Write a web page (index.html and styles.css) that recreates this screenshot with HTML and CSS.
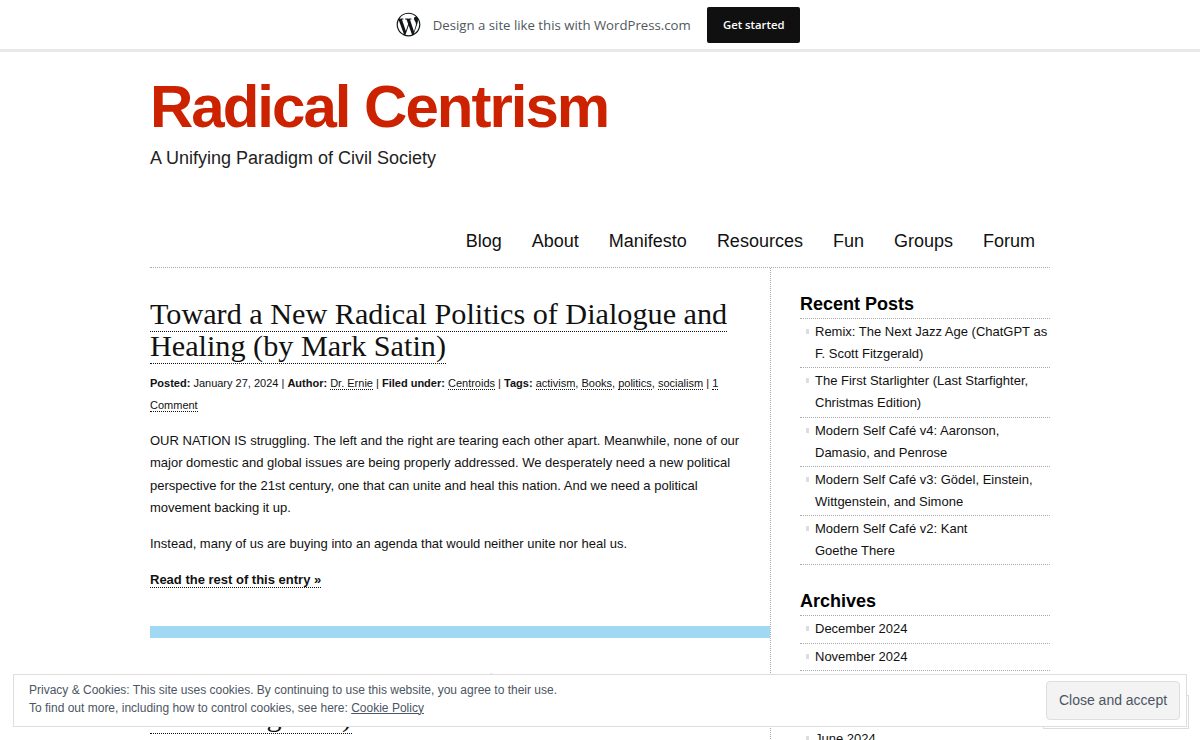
FILE: index.html
```html
<!DOCTYPE html>
<html lang="en">
<head>
<meta charset="utf-8">
<title>Radical Centrism</title>
<link rel="stylesheet" href="styles.css">
</head>
<body>
<div class="topbar">
  <svg class="wp-logo" viewBox="0 0 24 24" width="25" height="25" aria-hidden="true"><path fill="#101517" d="M12 .6C5.7.6.6 5.7.6 12S5.7 23.400 12 23.400 23.400 18.300 23.400 12 18.300.6 12 .6zM1.750 12c0-1.490.32-2.900.89-4.170l4.890 13.400C4.110 19.570 1.750 16.060 1.750 12zM12 22.250c-1.010 0-1.980-.15-2.900-.42l3.080-8.940 3.150 8.640c.02.05.05.1.08.14-1.070.37-2.210.58-3.410.58zM13.410 7.190c.62-.03 1.170-.1 1.170-.1.550-.06.490-.88-.06-.85 0 0-1.660.13-2.730.13-1 0-2.700-.13-2.700-.13-.55-.03-.62.820-.06.850 0 0 .52.070 1.070.1l1.590 4.360-2.240 6.700-3.720-11.060c.62-.03 1.170-.1 1.170-.1.550-.06.490-.88-.06-.85 0 0-1.660.13-2.730.13-.19 0-.42 0-.66-.01C5.050 3.500 8.310 1.750 12 1.750c2.750 0 5.250 1.050 7.130 2.770-.05 0-.09-.01-.14-.01-1.040 0-1.770.9-1.770 1.870 0 .87.5 1.610 1.040 2.480.4.710.87 1.610.87 2.920 0 .910-.35 1.960-.81 3.430l-1.060 3.550-3.850-11.570zM17.160 20.900l3.130-9.050c.58-1.460.78-2.620.78-3.660 0-.38-.03-.73-.07-1.050.80 1.460 1.250 3.130 1.250 4.860 0 3.780-2.050 7.080-5.090 8.900z"/></svg>
  <span class="topbar-text">Design a site like this with WordPress.com</span>
  <a class="topbar-btn" href="#">Get started</a>
</div>

<div class="page">
  <header class="masthead">
    <h1 class="site-title">Radical Centrism</h1>
    <p class="site-tag">A Unifying Paradigm of Civil Society</p>
  </header>

  <nav class="nav">
    <a href="#">Blog</a>
    <a href="#">About</a>
    <a href="#">Manifesto</a>
    <a href="#">Resources</a>
    <a href="#">Fun</a>
    <a href="#">Groups</a>
    <a href="#">Forum</a>
  </nav>

  <div class="columns">
    <main class="content">
      <article class="post">
        <h2 class="post-title"><a href="#">Toward a New Radical Politics of Dialogue and Healing (by Mark Satin)</a></h2>
        <p class="meta"><b>Posted:</b> January 27, 2024 | <b>Author:</b> <a href="#">Dr. Ernie</a> | <b>Filed under:</b> <a href="#">Centroids</a> | <b>Tags:</b> <a href="#">activism</a>, <a href="#">Books</a>, <a href="#">politics</a>, <a href="#">socialism</a> | <a href="#">1 Comment</a></p>
        <p class="body-text">OUR NATION IS struggling. The left and the right are tearing each other apart. Meanwhile, none of our major domestic and global issues are being properly addressed. We desperately need a new political perspective for the 21st century, one that can unite and heal this nation. And we need a political movement backing it up.</p>
        <p class="body-text">Instead, many of us are buying into an agenda that would neither unite nor heal us.</p>
        <p class="body-text"><a class="more" href="#">Read the rest of this entry »</a></p>
      </article>
      <div class="divider"></div>
      <article class="post">
        <h2 class="post-title"><a href="#">Remix: The Next Jazz Age (ChatGPT as F.<br>Scott Fitzgerald)</a></h2>
      </article>
    </main>

    <aside class="sidebar">
      <section class="widget">
        <h3 class="widget-title">Recent Posts</h3>
        <ul class="widget-list">
          <li><a href="#">Remix: The Next Jazz Age (ChatGPT as F. Scott Fitzgerald)</a></li>
          <li><a href="#">The First Starlighter (Last Starfighter, Christmas Edition)</a></li>
          <li><a href="#">Modern Self Café v4: Aaronson, Damasio, and Penrose</a></li>
          <li><a href="#">Modern Self Café v3: Gödel, Einstein, Wittgenstein, and Simone</a></li>
          <li><a href="#">Modern Self Café v2: Kant<br>Goethe There</a></li>
        </ul>
      </section>
      <section class="widget">
        <h3 class="widget-title">Archives</h3>
        <ul class="widget-list">
          <li><a href="#">December 2024</a></li>
          <li><a href="#">November 2024</a></li>
          <li><a href="#">October 2024</a></li>
          <li><a href="#">July 2024</a></li>
          <li><a href="#">June 2024</a></li>
        </ul>
      </section>
    </aside>
  </div>
</div>

<div class="actionbar-box"></div>
<div class="cookie">
  <div class="cookie-text">Privacy &amp; Cookies: This site uses cookies. By continuing to use this website, you agree to their use.<br>To find out more, including how to control cookies, see here: <a href="#">Cookie Policy</a></div>
  <button class="cookie-btn" type="button">Close and accept</button>
</div>
</body>
</html>
```
FILE: styles.css
```css
* { box-sizing: border-box; }
html, body { height: 100%; }
body {
  margin: 0;
  overflow: hidden;
  background: #fff;
  color: #111;
  font-family: "Liberation Sans", Arial, sans-serif;
  font-size: 13px;
}
a { color: inherit; text-decoration: none; }

.topbar {
  height: 52px;
  background: #fff;
  border-bottom: 3px solid #e8e8e8;
  display: flex;
  align-items: center;
  justify-content: center;
  padding-right: 4px;
}
.wp-logo { margin-right: 12px; }
.topbar-text {
  font-family: "Open Sans", sans-serif;
  font-size: 13.2px;
  color: #50575e;
  margin-right: 16.500px;
}
.topbar-btn {
  width: 93px;
  height: 36px;
  background: #101010;
  border-radius: 2px;
  color: #fff;
  font-family: "Open Sans", sans-serif;
  font-size: 11.300px;
  font-weight: 600;
  display: flex;
  align-items: center;
  justify-content: center;
}

.page { width: 900px; margin: 0 auto; }
.masthead { padding-top: 20px; }
.site-title {
  margin: 0;
  font-size: 60px;
  line-height: 70px;
  font-weight: 700;
  letter-spacing: -2px;
  color: #cc2200;
}
.site-tag { margin: 5px 0 0; font-size: 18px; line-height: 22px; color: #222; }

.nav {
  margin-top: 59px;
  height: 40px;
  display: flex;
  justify-content: flex-end;
  gap: 30px;
  padding-right: 15px;
  font-size: 18px;
  line-height: 26px;
  border-bottom: 1px dotted #aaa;
}

.columns { display: flex; }
.content {
  width: 621px;
  padding: 30px 0 0;
  border-right: 1px dotted #aaa;
}
.post-title {
  margin: 0;
  padding-right: 30px;
  font-family: "Liberation Serif", serif;
  font-size: 30.200px;
  line-height: 32px;
  font-weight: 400;
  color: #111;
}
.post-title a { border-bottom: 1px dotted #111; }
.meta { margin: 10px 0 0; padding-right: 40px; font-size: 11px; line-height: 22px; }
.meta a, .more { border-bottom: 1px dotted #111; }
.body-text { margin: 14px 0 0; padding-right: 30px; font-size: 13px; line-height: 22.300px; }
.more { font-weight: 700; }
.divider { height: 12px; margin-top: 34px; background: #a1d9f5; }
.post + .divider + .post { padding-top: 30px; }

.sidebar { width: 279px; padding: 24px 0 0 29px; }
.widget { margin-bottom: 24px; }
.widget-title { margin: 0; font-size: 18px; line-height: 24px; height: 26px; color: #000; }
.widget-list { margin: 0; padding: 0; list-style: none; border-top: 1px dotted #aaa; font-size: 13px; }
.widget-list li {
  position: relative;
  padding: 2px 0 2.300px 15px;
  line-height: 22px;
  border-bottom: 1px dotted #aaa;
}
.widget-list li::before {
  content: "";
  position: absolute;
  left: 6px;
  top: 10px;
  width: 3px;
  height: 5px;
  background: #ddd;
}

.actionbar-box {
  position: fixed;
  left: 1043px;
  top: 695px;
  width: 146px;
  height: 34px;
  background: #fff;
  border: 1px solid #ddd;
}
.cookie {
  position: fixed;
  left: 13px;
  top: 674px;
  width: 1174px;
  height: 53px;
  background: #fff;
  border: 1px solid #dedede;
  display: flex;
  align-items: center;
  justify-content: space-between;
  padding: 0 6px 0 15px;
}
.cookie-text { font-size: 12px; line-height: 18px; color: #4b5563; margin-bottom: 4px; }
.cookie-text a { text-decoration: underline; }
.cookie-btn {
  width: 134px;
  height: 39px;
  background: #f3f3f3;
  border: 1px solid #dedede;
  border-radius: 4px;
  color: #4b5563;
  font-family: "Liberation Sans", Arial, sans-serif;
  font-size: 14px;
  padding: 0 0 2px;
}
```
